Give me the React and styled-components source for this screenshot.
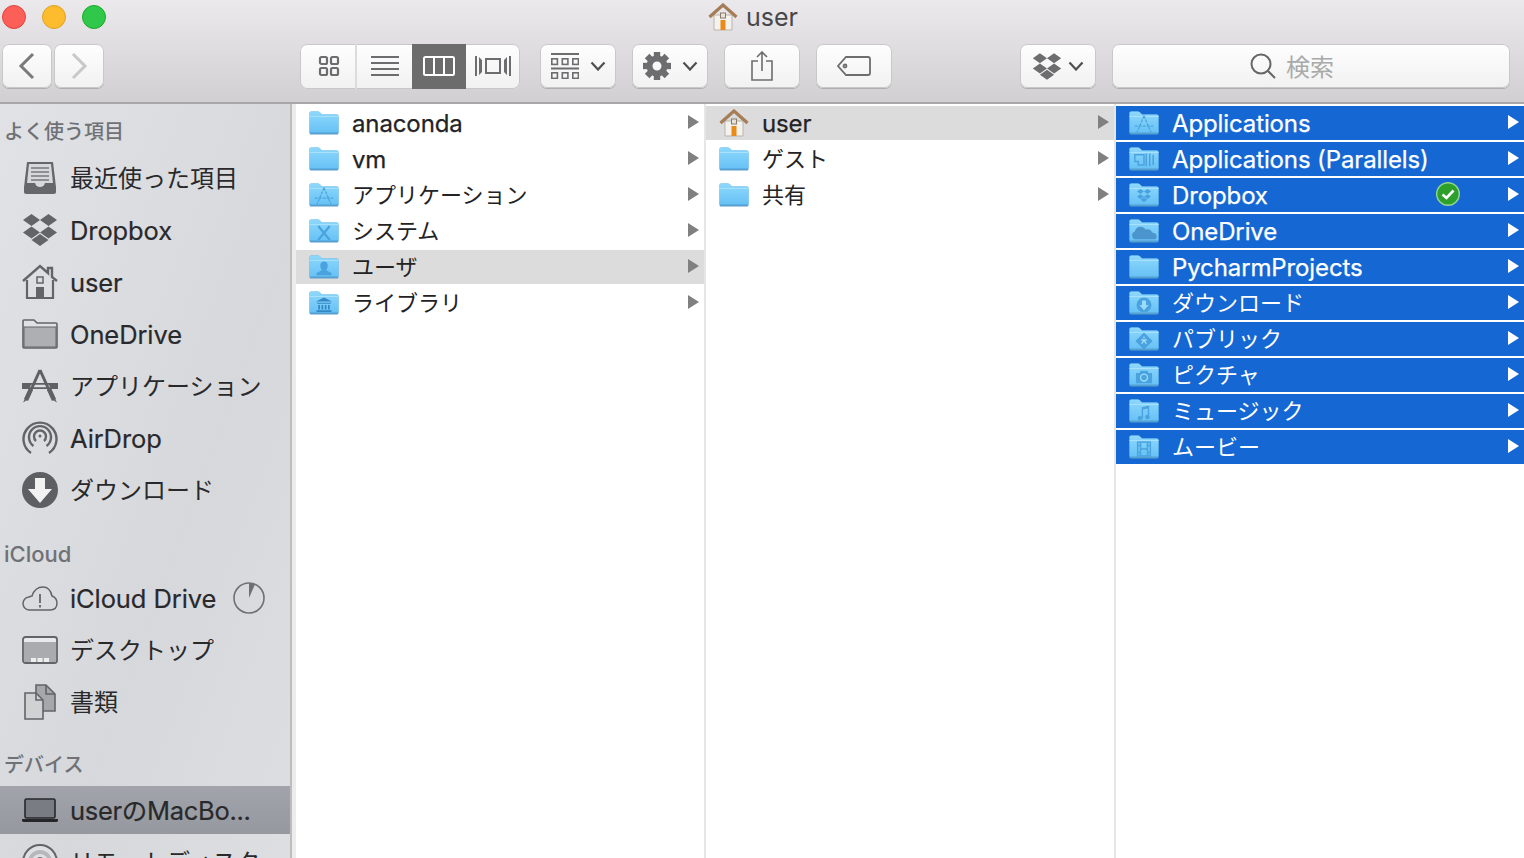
import React, { useId } from "react";
import styled, { createGlobalStyle } from "styled-components";

const Global = createGlobalStyle`
  html, body { margin: 0; padding: 0; background: #fff; }
  * { box-sizing: border-box; }
`;
const FONT = `Inter, "Noto Sans CJK JP", sans-serif`;

const Window = styled.div`
  width: 1524px; height: 858px; overflow: hidden; display: flex; flex-direction: column;
  font-family: ${FONT}; background: #fff;
`;
const Header = styled.header`
  height: 104px; flex: none; display: flex; flex-direction: column;
  background: linear-gradient(#ebe9ec, #d1cfd2); border-bottom: 2px solid #a9a8a9;
`;
const TitleBar = styled.div`
  height: 34px; flex: none; display: flex; align-items: center; padding-left: 2px; gap: 16px;
`;
const Light = styled.span`
  width: 24px; height: 24px; flex: none; border-radius: 50%; background: ${p => p.$c}; border: 1px solid ${p => p.$b};
`;
const Title = styled.div`
  margin-left: 586px; display: flex; align-items: center; gap: 8px; font-size: 25px; color: #47474a;
`;
const Toolbar = styled.div`
  margin-top: 10px; height: 44px; display: flex; padding-left: 2px;
`;
const Group = styled.div`
  display: flex; flex: none; gap: ${p => p.$gap || 0}px;
`;
const Btn = styled.button`
  width: ${p => p.$w}px; height: 44px; flex: none; padding: 0; margin: 0 0 0 ${p => p.$ml || 0}px;
  display: flex; align-items: center; justify-content: center; gap: ${p => p.$gap || 0}px;
  border: none; border-radius: 7px; font-family: inherit;
  background: linear-gradient(#fefefe, #f1f1f1);
  box-shadow: 0 0 0 1px #c8c8c8 inset, 0 1px 0 #aeaeae;
`;
const Segments = styled.div`
  display: flex; flex: none; margin-left: 196px; border-radius: 7px; overflow: hidden; height: 45px;
  background: linear-gradient(#fefefe, #f1f1f1); box-shadow: 0 0 0 1px #c8c8c8 inset;
`;
const Segment = styled.div`
  width: ${p => p.$w}px; flex: none; display: flex; align-items: center; justify-content: center;
  padding-left: ${p => p.$pl || 0}px; padding-bottom: 1px;
  background: ${p => (p.$on ? "#6c6c6c" : "transparent")};
  border-right: ${p => (p.$div ? "2px solid #dcdcdc" : "none")};
`;
const SearchBox = styled.div`
  width: 398px; height: 44px; flex: none; margin-left: 16px; border-radius: 7px; display: flex; align-items: center;
  justify-content: center; gap: 10px; color: #a9a9a9; font-size: 24px; padding-right: 38px;
  background: linear-gradient(#fefefe, #f1f1f1); box-shadow: 0 0 0 1px #c8c8c8 inset, 0 1px 0 #aeaeae;
`;
const SearchLabel = styled.span`
  padding-bottom: 2px;
`;
const Main = styled.main`
  flex: 1; display: flex; min-height: 0;
`;
const Sidebar = styled.aside`
  width: 290px; flex: none; overflow: hidden; padding-top: 8px;
  background: linear-gradient(110deg, #e0e2e5, #d6d8dc 60%, #dcdee1);
`;
const Splitter = styled.div`
  width: 6px; flex: none; background: #ececec; border-left: 2px solid #bdbdbd;
`;
const Heading = styled.div`
  height: 40px; display: flex; align-items: center; padding-left: ${p => p.$pl || 4}px;
  padding-top: ${p => p.$pt || 0}px; padding-bottom: ${p => p.$pb || 0}px;
  margin-top: ${p => p.$mt || 0}px; color: #6f7175; font-weight: 500; font-size: ${p => p.$fs || 20}px;
`;
const SideItem = styled.div`
  height: ${p => (p.$on ? 48 : 52)}px; margin: ${p => (p.$on ? "2px 0" : 0)};
  display: flex; align-items: center; padding-left: 22px; gap: 12px; color: #29292c; white-space: nowrap;
  font-size: ${p => (p.$ja ? 24 : 25.5)}px;
  background: ${p => (p.$on ? "linear-gradient(#a1a5ab, #95999f)" : "transparent")};
`;
const SideLabel = styled.span`
  padding-bottom: ${p => (p.$ja ? 4 : p.$on ? 4 : 0)}px;
  -webkit-text-stroke: ${p => (p.$ja ? 0 : 0.2)}px currentColor;
  letter-spacing: ${p => (p.$ja ? 0 : p.$on ? -0.3 : -0.1)}px;
`;
const Pie = styled.svg`
  margin-left: 5px; flex: none;
`;
const Column = styled.section`
  width: ${p => p.$w}px; flex: none; padding-top: 2px; display: flex; flex-direction: column; gap: 2px;
  border-right: ${p => (p.$last ? "none" : "2px solid #e6e6e6")};
`;
const Row = styled.div`
  height: 34px; flex: none; display: flex; align-items: center; padding: 0 5px 0 13px; gap: 13px;
  background: ${p => (p.$sel === "blue" ? "#1568d3" : p.$sel === "grey" ? "#dcdcdc" : "transparent")};
  color: ${p => (p.$sel === "blue" ? "#fff" : "#232326")};
  font-size: ${p => (p.$ja ? 22 : 24)}px;
`;
const RowLabel = styled.span`
  flex: 1; white-space: nowrap;
  padding-bottom: ${p => (p.$ja ? 4 : 0)}px;
  letter-spacing: ${p => (p.$ja ? 0 : -0.12)}px;
  -webkit-text-stroke: ${p => (p.$ja ? 0 : 0.25)}px currentColor;
`;
const Arrow = styled.span`
  width: 0; height: 0; flex: none; margin-bottom: 2px;
  border-left: 11px solid ${p => (p.$white ? "#fff" : "#808080")};
  border-top: 7px solid transparent; border-bottom: 7px solid transparent;
`;
const Badge = styled.svg`
  flex: none; margin-right: 35px; margin-bottom: 2px;
`;

const G = "#6d6d70";
const Chevron = () => (
  <svg width="16" height="10" viewBox="0 0 16 10"><path d="M1.5 1.5 8 8.5l6.5-7" fill="none" stroke="#4f4f4f" strokeWidth="2.2" /></svg>
);
const Nav = ({ d, c }) => (
  <svg width="18" height="28" viewBox="0 0 18 28"><path d={d} fill="none" stroke={c} strokeWidth="3" /></svg>
);
const GridIcon = () => (
  <svg width="22" height="22" viewBox="0 0 22 22" fill="none" stroke={G} strokeWidth="2.2">
    {[[2, 2], [13, 2], [2, 13], [13, 13]].map(([x, y]) => <rect key={x + "-" + y} x={x} y={y} width="7" height="7" rx="1.5" />)}
  </svg>
);
const ListIcon = () => (
  <svg width="28" height="20" viewBox="0 0 28 20" fill={G}>
    {[0, 6, 12, 18].map(y => <rect key={y} y={y} width="28" height="2" />)}
  </svg>
);
const ColumnsIcon = () => (
  <svg width="32" height="20" viewBox="0 0 32 20" fill="none" stroke="#fff" strokeWidth="2">
    <rect x="1" y="1" width="30" height="18" rx="1.5" /><path d="M11 1v18M21 1v18" />
  </svg>
);
const CoverIcon = () => (
  <svg width="36" height="20" viewBox="0 0 36 20" fill={G}>
    <rect width="2" height="20" /><rect x="34" width="2" height="20" />
    <path d="M4 1l3 3v12l-3 3zM32 1l-3 3v12l3 3z" />
    <rect x="11" y="3" width="14" height="14" fill="none" stroke={G} strokeWidth="2" />
  </svg>
);
const ArrangeIcon = () => (
  <svg width="28" height="26" viewBox="0 0 28 26" fill="none" stroke={G} strokeWidth="1.6">
    <path d="M0 1h28M0 15.500h28" strokeWidth="2" />
    {[0, 10.500, 21].map(x => <g key={x}><rect x={x + .8} y="5.800" width="5.600" height="5.600" /><rect x={x + .8} y="19.800" width="5.600" height="5.600" /></g>)}
  </svg>
);
const GearIcon = () => (
  <svg width="28" height="28" viewBox="0 0 28 28">
    {[0, 45, 90, 135, 180, 225, 270, 315].map(a => <rect key={a} x="10.800" y="0" width="6.400" height="7" fill={G} transform={`rotate(${a} 14 14)`} />)}
    <circle cx="14" cy="14" r="7.500" fill="none" stroke={G} strokeWidth="6" />
  </svg>
);
const ShareIcon = () => (
  <svg width="22" height="30" viewBox="0 0 22 30" fill="none" stroke={G} strokeWidth="1.6">
    <path d="M7 10H1v19h20V10h-6M11 20V1M6 6l5-5 5 5" />
  </svg>
);
const TagIcon = () => (
  <svg width="34" height="20" viewBox="0 0 34 20" fill="none" stroke={G} strokeWidth="1.800">
    <path d="M9 1h22a2 2 0 0 1 2 2v14a2 2 0 0 1-2 2H9l-8-9z" /><circle cx="8" cy="10" r="1.500" />
  </svg>
);
const DropboxGlyph = ({ w, h, c }) => (
  <svg width={w} height={h} viewBox="0 0 36 32" fill={c}>
    <path d="M9.500 0 18 6l-8.500 6L1 6zM26.500 0 35 6l-8.500 6L18 6zM9.500 12.500l8.500 6-8.500 6-8.500-6zM26.500 12.500l8.500 6-8.500 6-8.500-6zM18 20l8.500 6-8.500 6-8.500-6z" />
  </svg>
);
const SearchIcon = () => (
  <svg width="26" height="26" viewBox="0 0 26 26" fill="none" stroke="#666" strokeWidth="2"><circle cx="11" cy="11" r="9.500" /><path d="M18 18l7 7" /></svg>
);
const HomeColor = () => (
  <svg width="30" height="28" viewBox="0 0 30 28">
    <path d="M6 12h18v15H6z" fill="#f4f2ee" stroke="#b9b4ac" strokeWidth="1" />
    <path d="M1.500 14 15 2l13.500 12" fill="none" stroke="#a57d58" strokeWidth="3.200" />
    <rect x="12.500" y="10" width="5" height="5" fill="#e8e4dc" stroke="#8a7a68" />
    <rect x="12.500" y="17" width="5" height="10" fill="#ea8a17" />
  </svg>
);

const S = { Recents: () => (
  <svg width="36" height="36" viewBox="0 0 36 36">
    <path d="M5 2h26l3 25v5a2 2 0 0 1-2 2H4a2 2 0 0 1-2-2v-5z" fill="#66676a" />
    <path d="M7 4h22l2 19h-8q-1 4-5 4t-5-4H5z" fill="#d6d8db" />
    <path d="M9 8h18M9 12h18M9 16h18M9 20h18" stroke="#77787b" strokeWidth="1.500" />
  </svg>
), Dropbox: () => <DropboxGlyph w={36} h={32} c="#636468" />, Home: () => (
  <svg width="36" height="36" viewBox="0 0 36 36">
    <path d="M5 16v18h26V16" fill="none" stroke="#636468" strokeWidth="2.200" />
    <path d="M1 17 18 2l8 7V4h4v9l5 4" fill="none" stroke="#636468" strokeWidth="2.400" />
    <rect x="15" y="13" width="6" height="6" fill="none" stroke="#636468" strokeWidth="1.500" />
    <rect x="14" y="23" width="8" height="11" fill="#636468" />
  </svg>
), Folder: () => (
  <svg width="36" height="30" viewBox="0 0 36 30">
    <path d="M1 28V2q0-1 1-1h10l3 3h19q1 0 1 1v23q0 1-1 1H2q-1 0-1-1z" fill="#e0e1e3" stroke="#636468" strokeWidth="1.600" />
    <path d="M2 8h32v20H2z" fill="#adafb2" stroke="#636468" strokeWidth="1" />
  </svg>
), Apps: () => (
  <svg width="36" height="36" viewBox="0 0 36 36" fill="#5f6064">
    <path d="M18 2 9 22M18 2l9 20" stroke="#5f6064" strokeWidth="3" fill="none" />
    <path d="M9 21 4 32M27 21l5 11" stroke="#5f6064" strokeWidth="4.500" fill="none" />
    <path d="M1 34.500l2-4 2.500 1.200zM35 34.500l-2-4-2.500 1.200z" />
    <path d="M0 15h10l-3 6H0zM36 15H26l3 6h7z" />
    <path d="M9 15h18v1.800H9zM7 19.200h22V21H7z" />
  </svg>
), Airdrop: () => (
  <svg width="36" height="36" viewBox="0 0 36 36" fill="none" stroke="#636468" strokeWidth="2.400">
    <path d="M9 33a16.500 16.500 0 1 1 18 0" /><path d="M11.500 26a11 11 0 1 1 13 0" /><path d="M14 21a6 6 0 1 1 8 0" /><circle cx="18" cy="16" r="1.500" fill="#636468" stroke="none" />
  </svg>
), Download: () => (
  <svg width="36" height="36" viewBox="0 0 36 36"><circle cx="18" cy="18" r="18" fill="#5e5f63" /><path d="M13 6h10v11h7L18 31 6 17h7z" fill="#f2f2f2" /></svg>
), Cloud: () => (
  <svg width="36" height="26" viewBox="0 0 36 26" fill="none" stroke="#636468" strokeWidth="1.500">
    <path d="M8 25a6.500 6.500 0 0 1-1-13q2-1 3-1 3-9 11-9 7 0 9 9 5 2 5 7 0 7-7 7z" />
    <path d="M18 9v9M18 20v2.500" strokeWidth="1.800" />
  </svg>
), Desktop: () => (
  <svg width="36" height="28" viewBox="0 0 36 28">
    <rect x="1" y="1" width="34" height="26" rx="2.500" fill="#e9eaec" stroke="#636468" strokeWidth="1.800" />
    <rect x="2" y="6" width="32" height="20" fill="#a9abae" />
    <path d="M9 22h5v4H9zM15.500 22h5v4h-5zM22 22h5v4h-5z" fill="#eee" />
  </svg>
), Docs: () => (
  <svg width="32" height="36" viewBox="0 0 32 36" fill="#cfd1d3" stroke="#636468" strokeWidth="1.600">
    <path d="M12 1h10l9 9v17H12z" fill="#a5a7aa" />
    <path d="M22 1v9h9" fill="none" />
    <path d="M1 9h11l7 7v19H1z" />
    <path d="M12 9v7h7" fill="none" />
  </svg>
), Laptop: () => (
  <svg width="36" height="24" viewBox="0 0 36 24">
    <rect x="3" y="1" width="30" height="19" rx="1.500" fill="#797c83" stroke="#26272a" strokeWidth="1.600" />
    <path d="M0 21h36v1.500q0 1.500-2 1.500H2q-2 0-2-1.500z" fill="#26272a" />
  </svg>
), Disc: () => (
  <svg width="36" height="36" viewBox="0 0 36 36" fill="none"><circle cx="18" cy="18" r="17" fill="#dfe0e2" stroke="#636468" strokeWidth="2" /><circle cx="18" cy="18" r="10" stroke="#b6b7ba" strokeWidth="4" /><circle cx="18" cy="18" r="4.500" fill="#fff" stroke="#636468" /></svg>
) };

const glyphC = "#4aa3de";
const Glyphs = {
  app: <g stroke={glyphC} strokeWidth="1.100" fill="none"><path d="M15 6.500 9 20.500M15 6.500l6 14M7 15.500h16" strokeDasharray="2.500 1" /></g>,
  x: <path d="M10 8.500l10 12M20 8.500 10 20.500" stroke={glyphC} strokeWidth="2" fill="none" />,
  user: <path d="M15 8a3.200 3.200 0 0 1 3.200 3.800c0 2-1 3-1.400 3.700l4.700 2.500V20H8.500v-2l4.700-2.500c-.4-.7-1.400-1.700-1.400-3.700A3.200 3.200 0 0 1 15 8z" fill={glyphC} />,
  library: <g fill="#3588c4"><path d="M15 8l7 3.500H8z" /><path d="M9 12.500h12v1H9zM10 14.500h1.500v4H10zM12.800 14.500h1.500v4h-1.500zM15.700 14.500h1.500v4h-1.500zM18.500 14.500H20v4h-1.500zM8.500 19h13v1.500h-13z" /></g>,
  parallels: <g stroke={glyphC} strokeWidth="1.300" fill="none"><path d="M15 9H7v6h3v3h5zM17 8v11M20 8v11M23 9v9" /></g>,
  dropbox: <g transform="translate(8.500 7.500) scale(.36)"><path fill={glyphC} d="M9.500 0 18 6l-8.500 6L1 6zM26.500 0 35 6l-8.500 6L18 6zM9.500 12.500l8.500 6-8.500 6-8.500-6zM26.500 12.500l8.500 6-8.500 6-8.500-6zM18 20l8.500 6-8.500 6-8.500-6z" /></g>,
  cloud: <path d="M8 20a3.500 3.500 0 0 1-1-6.800Q8 9 12 9q3 0 4.500 2.500 4-1 5.500 2.500 4 .5 4 3.500 0 2.500-3 2.500z" fill="#4b95cc" />,
  download: <g><circle cx="15" cy="14.500" r="6.500" fill={glyphC} /><path d="M13.300 10.500h3.400v4h2.300L15 19l-4-4.500h2.300z" fill="#9cdcfb" /></g>,
  public: <g><path d="M15 7l7.500 7.500L15 22l-7.500-7.500z" fill={glyphC} /><path d="M15 10.500v1.500M13 17l2-3.500 2 3.500M12.500 13.500h5" stroke="#9cdcfb" strokeWidth="1.100" fill="none" /></g>,
  camera: <g><path d="M8 11h3l1-2h6l1 2h3v9H8z" fill={glyphC} /><circle cx="15" cy="15" r="3" fill="none" stroke="#9cdcfb" strokeWidth="1.200" /></g>,
  music: <g fill={glyphC}><circle cx="11.500" cy="19" r="2" /><circle cx="18" cy="18" r="2" /><path d="M13 19V9.500L19.500 8v10h-1.200v-7.500L14.200 11.500V19z" /></g>,
  film: <g fill="none" stroke={glyphC} strokeWidth="1.300"><rect x="9.500" y="8.500" width="11" height="12" /><path d="M12 8.500v12M18 8.500v12M12 14.500h6M9.500 11.500H12M9.500 17.500H12M18 11.500h2.500M18 17.500h2.500" /></g>,
};
const Folder = ({ glyph }) => {
  const id = "f" + useId().replace(/[^a-zA-Z0-9]/g, "");
  return (
    <svg width="30" height="24" viewBox="0 0 30 24" style={{ flex: "none" }}>
      <defs><linearGradient id={id} x1="0" y1="0" x2="0" y2="1"><stop offset="0" stopColor="#8ed8fc" /><stop offset="1" stopColor="#66c1f5" /></linearGradient></defs>
      <path d="M.5 22V2Q.5.5 2 .5h7q1 0 2 1L13 3.500h15q1.500 0 1.500 1.500v17q0 1.500-1.500 1.500H2Q.5 23.500.5 22z" fill="#569fd0" />
      <path d="M.5 22V2Q.5.5 2 .5h7q1 0 2 1L13 3.500h15q1.500 0 1.500 1.500v16.500H.5z" fill={`url(#${id})`} />
      <path d="M.5 5.500h29" stroke="#a9e1fc" strokeWidth="1" />
      {glyph && <g transform="translate(15 14) scale(1.15) translate(-15 -14.500)">{Glyphs[glyph]}</g>}
    </svg>
  );
};

const col1 = [
  { t: "anaconda" }, { t: "vm" }, { t: "アプリケーション", g: "app", ja: 1 }, { t: "システム", g: "x", ja: 1 },
  { t: "ユーザ", g: "user", ja: 1, sel: "grey" }, { t: "ライブラリ", g: "library", ja: 1 },
];
const col2 = [{ t: "user", home: 1, sel: "grey" }, { t: "ゲスト", ja: 1 }, { t: "共有", ja: 1 }];
const col3 = [
  { t: "Applications", g: "app" }, { t: "Applications (Parallels)", g: "parallels" }, { t: "Dropbox", g: "dropbox", ok: 1 },
  { t: "OneDrive", g: "cloud" }, { t: "PycharmProjects" }, { t: "ダウンロード", g: "download", ja: 1 }, { t: "パブリック", g: "public", ja: 1 },
  { t: "ピクチャ", g: "camera", ja: 1 }, { t: "ミュージック", g: "music", ja: 1 }, { t: "ムービー", g: "film", ja: 1 },
].map(r => ({ ...r, sel: "blue" }));

const FileColumn = ({ w, rows, last }) => (
  <Column $w={w} $last={last}>
    {rows.map(r => (
      <Row key={r.t} $sel={r.sel} $ja={r.ja}>
        {r.home ? <HomeColor /> : <Folder glyph={r.g} />}
        <RowLabel $ja={r.ja}>{r.t}</RowLabel>
        {r.ok && (
          <Badge width="24" height="24" viewBox="0 0 24 24">
            <circle cx="12" cy="12" r="11.300" fill="#2d9f2b" stroke="#93d58f" strokeWidth="1.400" />
            <path d="M6.500 12.500l4 3.500 7-7.500" fill="none" stroke="#fff" strokeWidth="2.600" />
          </Badge>
        )}
        <Arrow $white={r.sel === "blue"} />
      </Row>
    ))}
  </Column>
);

const IconSlot = styled.span`
  width: 36px; height: 36px; flex: none; display: flex; align-items: center; justify-content: center;
`;
const Item = ({ icon: I, label, ja, on, children }) => (
  <SideItem $ja={ja} $on={on}>
    <IconSlot><I /></IconSlot>
    <SideLabel $ja={ja} $on={on}>{label}</SideLabel>
    {children}
  </SideItem>
);

export default function App() {
  return (
    <Window>
      <Global />
      <Header>
        <TitleBar>
          <Light $c="#fc5f57" $b="#e0443e" />
          <Light $c="#fdbc2e" $b="#dea123" />
          <Light $c="#2fc84a" $b="#1aab29" />
          <Title><HomeColor />user</Title>
        </TitleBar>
        <Toolbar>
          <Group $gap={2}>
            <Btn $w={50}><Nav d="M15 2 3 14l12 12" c="#7a7a7a" /></Btn>
            <Btn $w={50}><Nav d="M3 2l12 12L3 26" c="#c8c8c8" /></Btn>
          </Group>
          <Segments>
            <Segment $w={57} $div $pl={3}><GridIcon /></Segment>
            <Segment $w={55}><ListIcon /></Segment>
            <Segment $w={54} $on><ColumnsIcon /></Segment>
            <Segment $w={54}><CoverIcon /></Segment>
          </Segments>
          <Btn $w={76} $ml={20} $gap={11}><ArrangeIcon /><Chevron /></Btn>
          <Btn $w={76} $ml={16} $gap={11}><GearIcon /><Chevron /></Btn>
          <Btn $w={76} $ml={16}><ShareIcon /></Btn>
          <Btn $w={76} $ml={16}><TagIcon /></Btn>
          <Btn $w={76} $ml={128} $gap={6}><DropboxGlyph w={30} h={27} c={G} /><Chevron /></Btn>
          <SearchBox><SearchIcon /><SearchLabel>検索</SearchLabel></SearchBox>
        </Toolbar>
      </Header>
      <Main>
        <Sidebar>
          <Heading $pb={4}>よく使う項目</Heading>
          <Item icon={S.Recents} label="最近使った項目" ja />
          <Item icon={S.Dropbox} label="Dropbox" />
          <Item icon={S.Home} label="user" />
          <Item icon={S.Folder} label="OneDrive" />
          <Item icon={S.Apps} label="アプリケーション" ja />
          <Item icon={S.Airdrop} label="AirDrop" />
          <Item icon={S.Download} label="ダウンロード" ja />
          <Heading $mt={16} $pl={4} $fs={22} $pt={4}>iCloud</Heading>
          <Item icon={S.Cloud} label="iCloud Drive">
            <Pie width="32" height="32" viewBox="0 0 32 32">
              <circle cx="16" cy="16" r="15" fill="none" stroke="#6f7074" strokeWidth="1.600" />
              <path d="M16 16V1a15 15 0 0 1 6 1.300z" fill="#6f7074" />
            </Pie>
          </Item>
          <Item icon={S.Desktop} label="デスクトップ" ja />
          <Item icon={S.Docs} label="書類" ja />
          <Heading $mt={16} $pb={2}>デバイス</Heading>
          <Item icon={S.Laptop} label="userのMacBo..." on />
          <Item icon={S.Disc} label="リモートディスク" ja />
        </Sidebar>
        <Splitter />
        <FileColumn w={410} rows={col1} />
        <FileColumn w={410} rows={col2} />
        <FileColumn w={408} rows={col3} last />
      </Main>
    </Window>
  );
}
